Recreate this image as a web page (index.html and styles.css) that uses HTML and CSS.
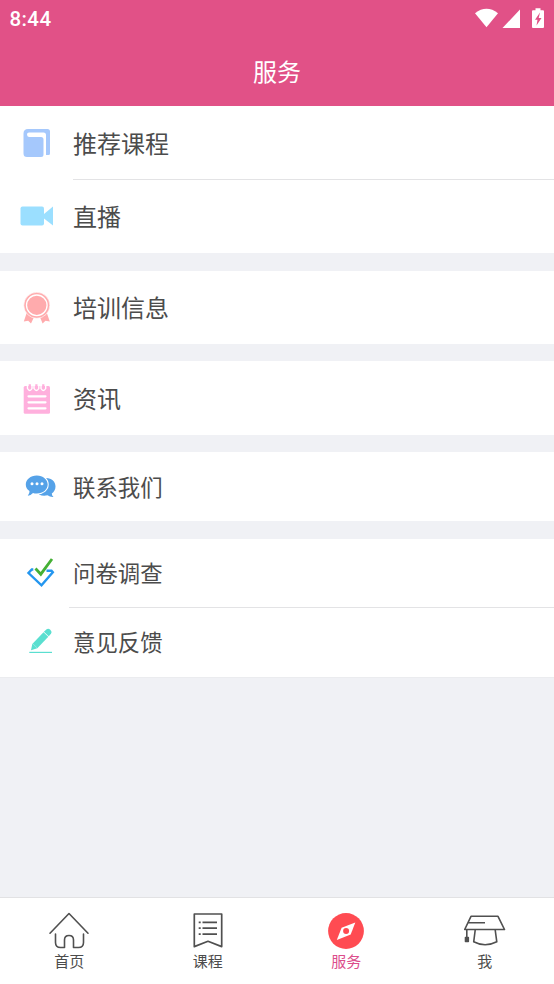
FILE: index.html
```html
<!DOCTYPE html>
<html lang="zh-CN">
<head>
<meta charset="utf-8">
<title>服务</title>
<link rel="stylesheet" href="styles.css">
</head>
<body>
<div class="app">
  <header class="header">
    <div class="status">
      <span class="clock">8:44</span>
      <svg class="status-icons" width="80" height="38" viewBox="0 0 80 38" fill="#fff">
        <path d="M1 13.2Q12.500 4.500 24 13.200L12.500 27.300Z"/>
        <path d="M46 9.500V28H28.500Z"/>
        <path fill-rule="evenodd" d="M61.500 8.200h5v2H69Q70 10.200 70 11.200V27Q70 28 69 28H59Q58 28 58 27V11.200Q58 10.200 59 10.200H61.500zM66 12.500l-5 7.200h2.500l-1 5.800 5-7.500h-2.800z"/>
      </svg>
    </div>
    <h1 class="title">服务</h1>
  </header>

  <main class="content">
    <section class="group">
      <div class="row">
        <svg class="icon" viewBox="0 0 73 73">
          <path fill="#a5c8fc" d="M28 23H47.500Q50 23 50 25.500V47.500Q50 49 48.500 49H46V29Q46 26.500 43.500 26.500H29Q27 26.500 27 28.500T29 31H41Q43.500 31 43.500 33.500V48.500Q43.500 51 41 51H27Q23.500 51 23.500 47.500V27.500Q23.500 23 28 23Z"/>
        </svg>
        <span class="label">推荐课程</span>
      </div>
      <div class="row divided">
        <svg class="icon" viewBox="0 0 73 73" fill="#9bdfff">
          <rect x="20.500" y="26.500" width="23.500" height="19" rx="2"/>
          <path d="M44 34L53 26.500V45.500L44 38.500Z"/>
        </svg>
        <span class="label">直播</span>
      </div>
    </section>

    <section class="group">
      <div class="row">
        <svg class="icon" viewBox="0 0 73 73" fill="#ffabad">
          <path d="M27 41L23.800 50.500 28.200 49.700 31 52.500 34.500 45ZM46.500 41L49.800 50.500 45.500 49.700 42.600 52.500 39.500 45Z"/>
          <circle cx="36.800" cy="34.300" r="13" stroke="#fff" stroke-width=".6"/>
          <circle cx="36.800" cy="34.300" r="10.300" fill="none" stroke="#fff" stroke-width="1.300"/>
        </svg>
        <span class="label">培训信息</span>
      </div>
    </section>

    <section class="group">
      <div class="row">
        <svg class="icon" viewBox="0 0 73 73">
          <rect x="23.700" y="24" width="26.300" height="27.700" rx="1.500" fill="#ffb0dd"/>
          <path d="M27.500 22V26.500Q29.700 30.500 32 26.500V22M34 22V26.500Q36.500 30.500 38.800 26.500V22M41 22V26.500Q43.300 30.500 45.700 26.500V22" fill="none" stroke="#fff" stroke-width="1.400"/>
          <path d="M29.800 22.300V26M36.400 22.300V26M43.300 22.300V26" stroke="#ffb0dd" stroke-width="2.200"/>
          <path d="M28.500 34.300H45.500M28.500 40.300H45.500M28.500 46.300H45.500" stroke="#fff" stroke-width="2.200" stroke-linecap="round"/>
        </svg>
        <span class="label">资讯</span>
      </div>
    </section>

    <section class="group">
      <div class="row compact">
        <svg class="icon" viewBox="0 0 73 69" fill="#55a2e8">
          <path d="M46 26C52 26 55.500 30 55.500 34.500 55.500 37.500 54 40 51.800 41.500Q51.800 43.500 53.500 45Q50 45.200 47.500 43.300 43 44.500 39 42.500Z"/>
          <path d="M36.800 23.500C43 23.500 47.700 27.500 47.700 32.500S43 41.500 36.800 41.500Q34.500 41.500 33 41Q30.500 43.800 27.800 43.700Q29.800 41.500 29.500 39Q25.800 36.500 25.800 32.500C25.800 27.500 30.500 23.500 36.800 23.500Z" stroke="#fff" stroke-width="2" paint-order="stroke"/>
          <g fill="#fff"><circle cx="32" cy="31.800" r="1.500"/><circle cx="37" cy="31.800" r="1.500"/><circle cx="42" cy="31.800" r="1.500"/></g>
        </svg>
        <span class="label">联系我们</span>
      </div>
    </section>

    <section class="group last">
      <div class="row compact">
        <svg class="icon" viewBox="0 0 73 69" fill="none">
          <path d="M33.300 30.500H31.800L28.500 34 41.500 46.300 52.800 33.200 51.500 31.800H46.500" stroke="#2496ef" stroke-width="2.400"/>
          <path d="M35.500 29.500L40.800 35.200 52 20" stroke="#45b035" stroke-width="2.800"/>
        </svg>
        <span class="label">问卷调查</span>
      </div>
      <div class="row compact divided wide">
        <svg class="icon" viewBox="0 0 73 69" fill="#5adfd0">
          <path d="M31 43.200L32.300 37 43.500 25.200 48.300 29.700 37.300 41.300Z"/>
          <path d="M43.900 24.800L46.600 22.300Q48.500 21.100 50.500 23T51 26.800L48.700 29.300Z"/>
          <path d="M33 37L37 40.800" stroke="#a4eee6" stroke-width=".7"/>
          <rect x="29.300" y="44.800" width="22.700" height="1.200"/>
        </svg>
        <span class="label">意见反馈</span>
      </div>
    </section>
  </main>

  <nav class="tabs">
    <a class="tab">
      <svg width="44" height="40" viewBox="0 0 44 40" fill="none" stroke="#505050" stroke-width="1.600" stroke-linecap="round" stroke-linejoin="round">
        <path d="M3 23.200L22 3.500 41 23.200M8.500 24V32.500Q8.500 37.500 13.500 37.500H17.500V30Q17.500 25.500 22 25.500T26.500 30V37.500H31.500Q36.500 37.500 36.500 32.500V24"/>
      </svg>
      <span>首页</span>
    </a>
    <a class="tab">
      <svg width="44" height="40" viewBox="0 0 44 40" fill="none" stroke="#505050" stroke-width="1.700" stroke-linejoin="round">
        <path d="M8.300 4H35.700V36.600L22 31.300 8.300 36.600Z"/>
        <path d="M16.500 12.300H31M16.500 18.200H31M16.500 24.100H31M12.700 12.300H14.700M12.700 18.200H14.700M12.700 24.100H14.700"/>
      </svg>
      <span>课程</span>
    </a>
    <a class="tab active">
      <svg width="44" height="40" viewBox="0 0 44 40">
        <circle cx="22" cy="21" r="17.900" fill="#ff4b52"/>
        <path fill="#fff" d="M31.300 12.500L26.700 24.500 12.800 30 17.600 17.800Z"/>
        <circle cx="22.100" cy="21" r="3" fill="#ff4b52"/>
      </svg>
      <span>服务</span>
    </a>
    <a class="tab">
      <svg width="44" height="40" viewBox="0 0 44 40" fill="none" stroke="#505050" stroke-width="1.600" stroke-linejoin="round">
        <path d="M1.700 19.500L8 6.300H35L41.500 19.500ZM5.500 12.700H22M12.200 20L10.700 31.800Q22 37.800 33.800 31.800L32.200 20M3.800 20V29"/>
        <path d="M2.500 27.500H5.300V31.500H2.500Z" fill="#505050"/>
      </svg>
      <span>我</span>
    </a>
  </nav>
</div>
</body>
</html>
```

FILE: styles.css
```css
* {
  box-sizing: border-box;
}

body {
  margin: 0;
  font-family: Roboto, "Noto Sans CJK SC", sans-serif;
  color: #4c4c4c;
}

.app {
  display: flex;
  flex-direction: column;
  height: 984px;
  background: #f0f1f5;
}

.header {
  height: 106px;
  background: #e15187;
  color: #fff;
}

.status {
  display: flex;
  justify-content: space-between;
  height: 38px;
  padding: 0 0 0 9.5px;
}

.clock {
  font-size: 20.5px;
  font-weight: 500;
  line-height: 38px;
  letter-spacing: 0.4px;
}

.title {
  margin: 0;
  font-size: 24px;
  font-weight: 400;
  line-height: 71px;
  text-align: center;
}

.content {
  display: flex;
  flex: 1;
  flex-direction: column;
  gap: 17.4px;
}

.group {
  background: #fff;
}

.row {
  display: flex;
  align-items: center;
  height: 73.4px;
  font-size: 24px;
}

.row.compact {
  height: 69px;
  font-size: 22.4px;
}

.icon {
  flex: none;
  width: 73px;
}

.label {
  padding-top: 4px;
  line-height: 36px;
}

.compact .label {
  padding-top: 2px;
}

.row.divided {
  height: 73.8px;
  background: linear-gradient(#e3e3e5, #e3e3e5) 73px 0 / 100% 1px no-repeat;
}

.row.divided.wide {
  height: 69.6px;
  margin-top: -0.5px;
  background-position: 69px 0;
}

.group.last {
  border-bottom: 1px solid #ebecef;
}

.tabs {
  display: grid;
  grid-template-columns: repeat(4, 1fr);
  height: 87px;
  border-top: 1px solid #e2e2e4;
  background: #fff;
}

.tab {
  display: flex;
  flex-direction: column;
  align-items: center;
  padding-top: 12px;
  font-size: 15px;
  line-height: 25px;
}

.tab.active {
  color: #dc4d8c;
}
```
